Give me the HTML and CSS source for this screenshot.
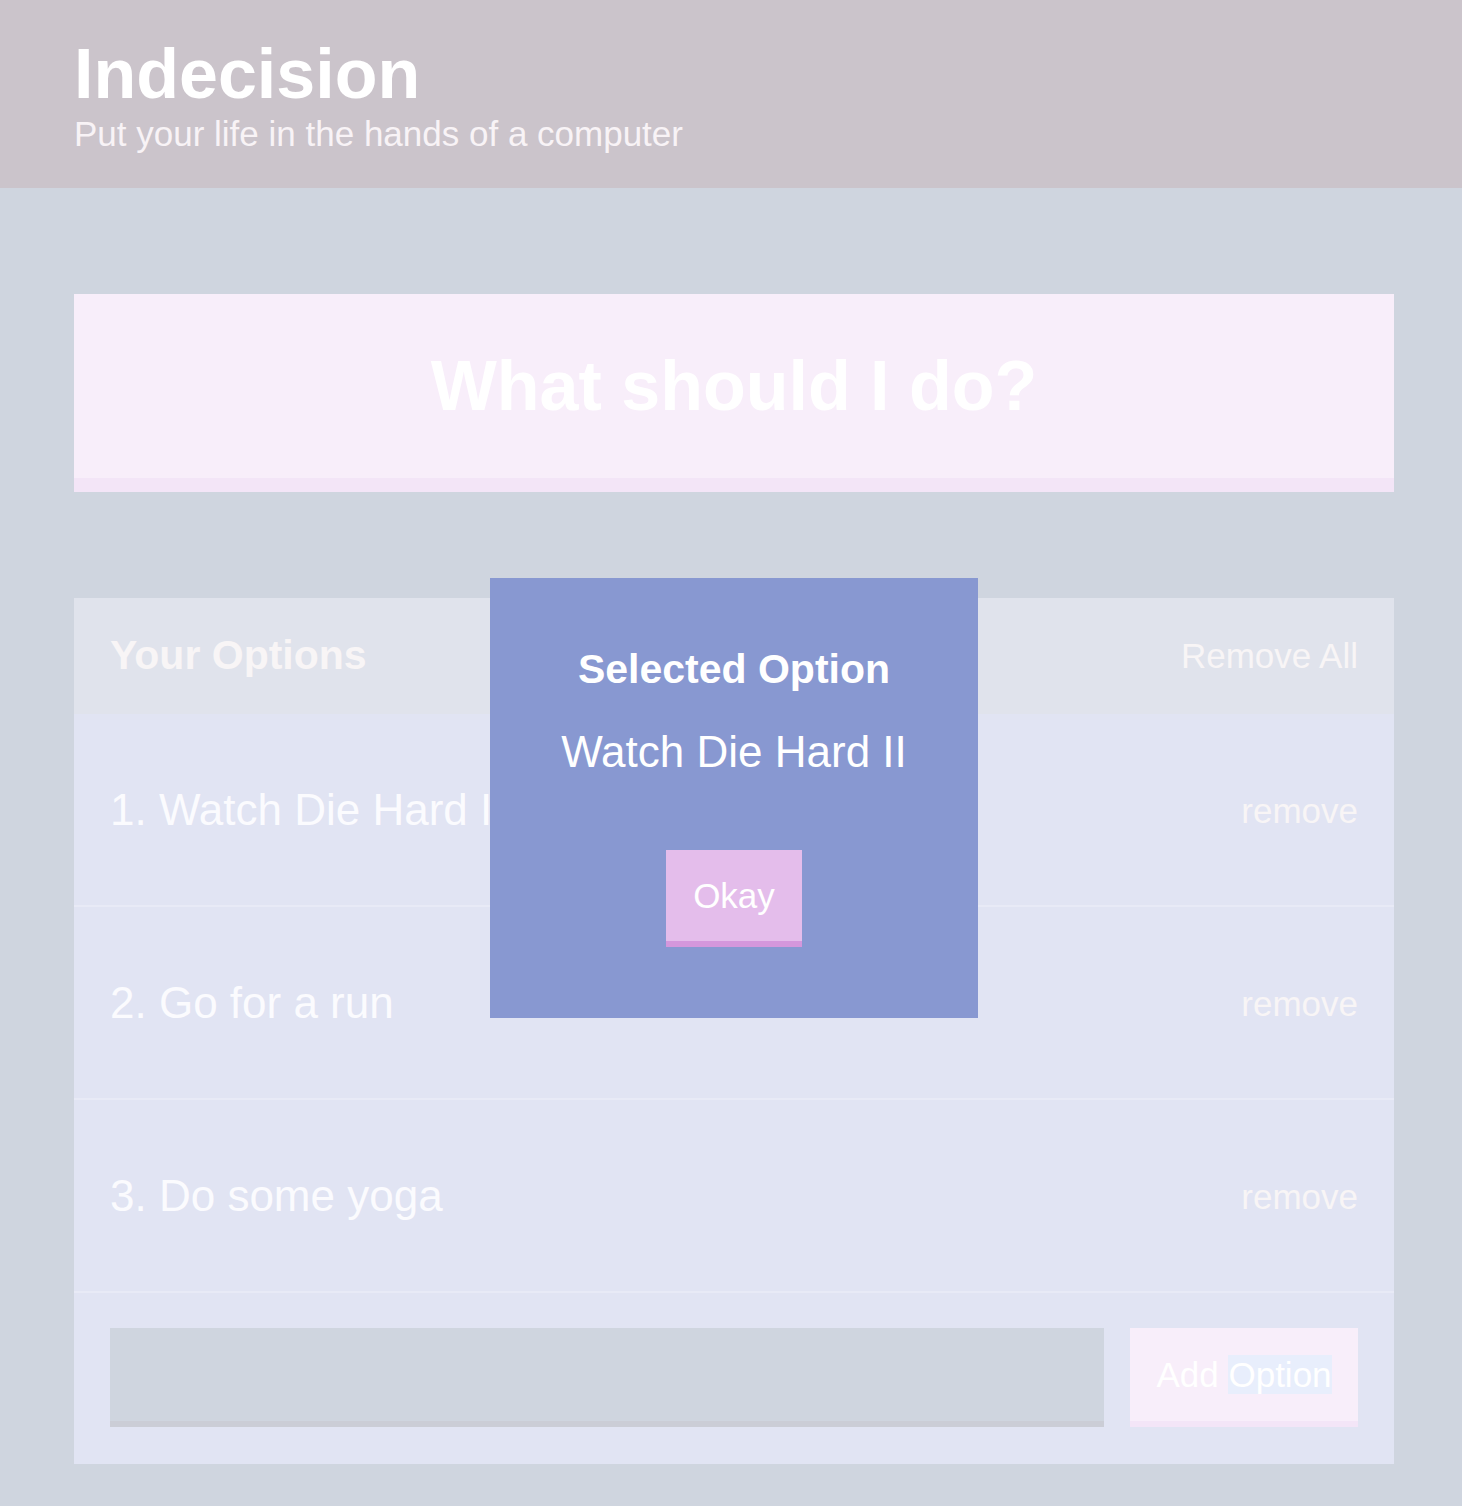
FILE: index.html
```html
<!DOCTYPE html>
<html lang="en">
<head>
<meta charset="utf-8">
<title>Indecision</title>
<link rel="stylesheet" href="styles.css">
</head>
<body>
<header class="header">
  <div class="container">
    <h1 class="header__title">Indecision</h1>
    <h2 class="header__subtitle">Put your life in the hands of a computer</h2>
  </div>
</header>
<main class="container main">
  <button class="big-button">What should I do?</button>
  <section class="widget">
    <div class="widget-header">
      <h3 class="widget-header__title">Your Options</h3>
      <button class="link-button">Remove All</button>
    </div>
    <div class="option">
      <p class="option__text">1. Watch Die Hard II</p>
      <button class="link-button">remove</button>
    </div>
    <div class="option">
      <p class="option__text">2. Go for a run</p>
      <button class="link-button">remove</button>
    </div>
    <div class="option">
      <p class="option__text">3. Do some yoga</p>
      <button class="link-button">remove</button>
    </div>
    <form class="add-option">
      <input class="add-option__input" type="text" name="option">
      <button class="button" type="button">Add <span class="selected">Option</span></button>
    </form>
  </section>
</main>
<div class="modal">
  <h3 class="modal__title">Selected Option</h3>
  <p class="modal__body">Watch Die Hard II</p>
  <button class="modal__button">Okay</button>
</div>
</body>
</html>
```
FILE: styles.css
```css
* { box-sizing: border-box; }
html, body {
  margin: 0;
  padding: 0;
}
body {
  background: #cfd5df;
  font-family: "Liberation Sans", Helvetica, Arial, sans-serif;
  color: #ffffff;
  min-height: 1506px;
  position: relative;
}
button, input {
  font-family: inherit;
}
.container {
  width: 1320px;
  margin-left: 74px;
}
.header {
  background: #cbc4cb;
  padding: 39px 0 37px;
}
.header__title {
  margin: 0;
  font-size: 70px;
  line-height: 70px;
  font-weight: bold;
  color: #ffffff;
}
.header__subtitle {
  margin: 7px 0 0;
  font-size: 35px;
  line-height: 35px;
  font-weight: normal;
  color: #f8f3f6;
}
.main {
  padding: 106px 0 43px;
}
.big-button {
  display: block;
  width: 100%;
  background: #f8eefa;
  border: none;
  border-bottom: 14px solid #f3e5f7;
  color: #ffffff;
  font-size: 70px;
  line-height: 70px;
  font-weight: bold;
  padding: 57px 0;
  margin: 0 0 106px;
}
.widget {
  background: #e1e4f3;
}
.widget-header {
  background: #e0e3ec;
  height: 116px;
  display: flex;
  align-items: center;
  justify-content: space-between;
  padding: 0 36px 1px;
}
.widget-header__title {
  margin: 0;
  font-size: 41px;
  line-height: 41px;
  font-weight: bold;
  color: #f8f5f6;
}
.link-button {
  background: none;
  border: none;
  padding: 0;
  font-size: 35px;
  line-height: 35px;
  color: #f8f5f6;
}
.option {
  display: flex;
  align-items: center;
  justify-content: space-between;
  padding: 74px 36px 73px;
  border-bottom: 2px solid #e8eaf6;
}
.option__text {
  margin: 0;
  font-size: 44px;
  line-height: 44px;
  color: #fbfbfe;
}
.add-option {
  display: flex;
  gap: 26px;
  padding: 35px 36px 37px;
  margin: 0;
}
.add-option__input {
  flex: 1;
  height: 99px;
  background: #cfd5df;
  border: none;
  border-bottom: 6px solid #cbcdd6;
  outline: none;
}
.button {
  width: 228px;
  height: 99px;
  background: #f8eefa;
  border: none;
  border-bottom: 6px solid #f3e5f7;
  color: #ffffff;
  font-size: 35px;
  line-height: 42px;
  padding: 0;
}
.selected {
  background: #e8eefc;
}
.modal {
  position: absolute;
  left: 490px;
  top: 578px;
  width: 488px;
  background: #8898d1;
  text-align: center;
  padding: 71px 20px 71px;
}
.modal__title {
  margin: 0;
  font-size: 41px;
  line-height: 40px;
  font-weight: bold;
  color: #ffffff;
}
.modal__body {
  margin: 41px 0 76px;
  font-size: 44px;
  line-height: 44px;
  color: #ffffff;
}
.modal__button {
  background: #e4bdeb;
  border: none;
  border-bottom: 6px solid #d497dc;
  color: #ffffff;
  font-size: 35px;
  line-height: 35px;
  padding: 28px 27px;
}
```
